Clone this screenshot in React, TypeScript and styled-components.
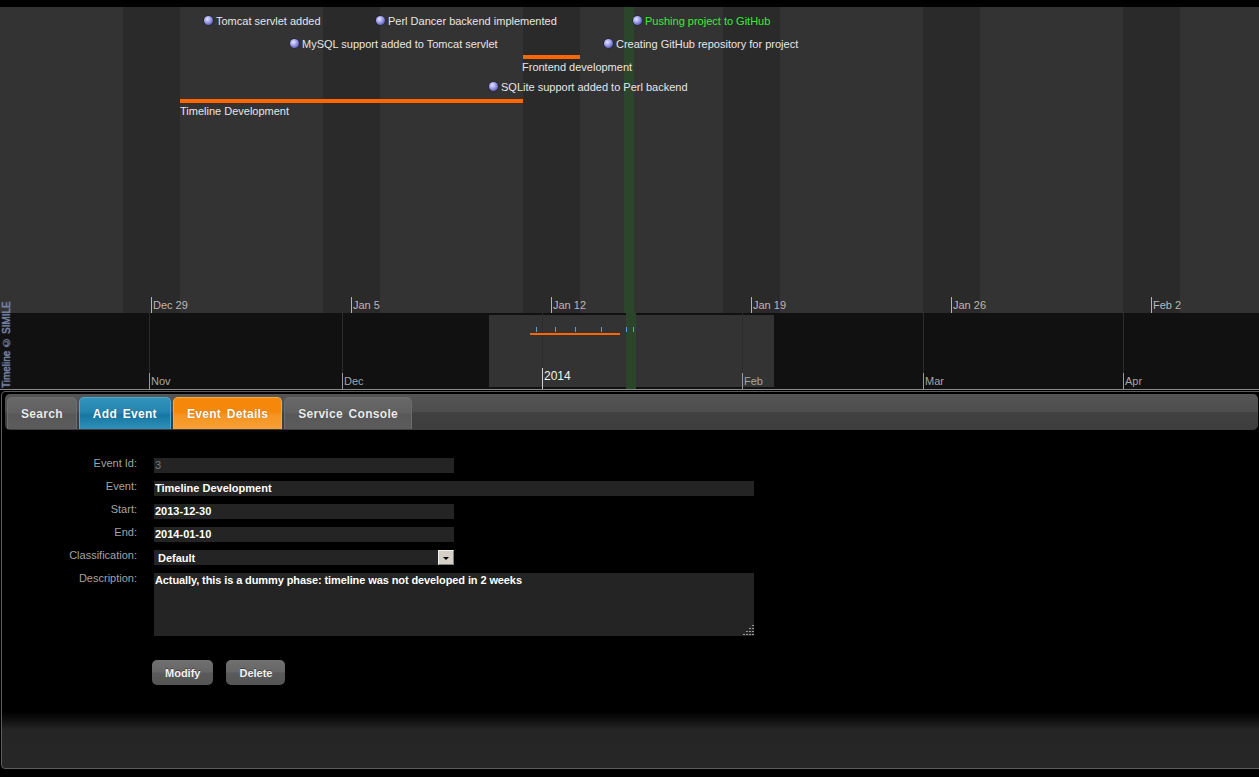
import React from "react";
import styled, { createGlobalStyle } from "styled-components";

const GlobalStyle = createGlobalStyle`
  html, body { margin: 0; padding: 0; background: #000; overflow: hidden; }
  body { font-family: "Liberation Sans", Arial, sans-serif; }
  * { box-sizing: border-box; }
`;

const Page = styled.div`
  width: 1259px;
  height: 777px;
  background: #000;
  display: flex;
  flex-direction: column;
  overflow: hidden;
`;

const TopGap = styled.div`
  height: 7px;
  flex: none;
`;

const Timeline = styled.div`
  position: relative;
  z-index: 1;
  flex: none;
  display: flex;
  flex-direction: column;
  border-bottom: 1px solid #8a8a8a;
`;

const UpperBand = styled.div`
  position: relative;
  height: 306px;
  background: #333333;
  overflow: hidden;
`;

const LowerBand = styled.div`
  position: relative;
  height: 76px;
  background: #111111;
  overflow: hidden;
`;

const Stripe = styled.div<{ $x: number; $w: number; $c: string }>`
  position: absolute;
  top: 0;
  bottom: 0;
  left: ${(p) => p.$x}px;
  width: ${(p) => p.$w}px;
  background: ${(p) => p.$c};
`;

const EventRow = styled.div<{ $x: number; $y: number; $green?: boolean }>`
  position: absolute;
  left: ${(p) => p.$x}px;
  top: ${(p) => p.$y}px;
  height: 13px;
  display: flex;
  align-items: center;
  gap: 3px;
  white-space: nowrap;
  font-size: 11px;
  line-height: 13px;
  color: ${(p) => (p.$green ? "#33f033" : "#e6e6e6")};
`;

const EventText = styled.span`
  position: relative;
  top: 1px;
`;

const Dot = styled.span`
  width: 9px;
  height: 9px;
  border-radius: 50%;
  flex: none;
  background: radial-gradient(circle at 38% 35%, #e4e4ff 0%, #a9a9ee 35%, #5656b8 80%, #2e2e70 100%);
  box-shadow: 0 0 0 0.5px #1c1c3a;
`;

const Bar = styled.div<{ $x: number; $y: number; $w: number }>`
  position: absolute;
  left: ${(p) => p.$x}px;
  top: ${(p) => p.$y}px;
  width: ${(p) => p.$w}px;
  height: 4px;
  background: #ff6600;
`;

const BarLabel = styled.div<{ $x: number; $y: number }>`
  position: absolute;
  left: ${(p) => p.$x}px;
  top: ${(p) => p.$y}px;
  font-size: 11px;
  line-height: 13px;
  color: #e6e6e6;
  white-space: nowrap;
`;

const Tick = styled.div<{ $x: number; $top: number; $h: number; $c: string }>`
  position: absolute;
  left: ${(p) => p.$x}px;
  top: ${(p) => p.$top}px;
  width: 1px;
  height: ${(p) => p.$h}px;
  background: ${(p) => p.$c};
`;

const DateLabel = styled.div<{ $x: number; $top: number; $c: string; $size?: number }>`
  position: absolute;
  left: ${(p) => p.$x}px;
  top: ${(p) => p.$top}px;
  font-size: ${(p) => p.$size ?? 11}px;
  line-height: 13px;
  color: ${(p) => p.$c};
  white-space: nowrap;
`;

const Highlight = styled.div`
  position: absolute;
  left: 489px;
  top: 2px;
  width: 285px;
  height: 72px;
  background: #333333;
`;

const MiniBar = styled.div`
  position: absolute;
  left: 530px;
  top: 20px;
  width: 90px;
  height: 2px;
  background: #ff6600;
`;

const Credit = styled.div`
  position: absolute;
  left: 1px;
  top: 302px;
  height: 79px;
  width: 12px;
  writing-mode: vertical-rl;
  transform: rotate(180deg);
  font-size: 10px;
  line-height: 12px;
  color: #6d7ca3;
  text-shadow: 0 0 1px #a9b5d6;
  white-space: nowrap;
  text-align: left;
`;

const Panel = styled.div`
  flex: none;
  margin: 1px -4px 0 1px;
  height: 378px;
  border: 1px solid #5c5c5c;
  border-radius: 4px;
  background: linear-gradient(
    to bottom,
    #000 0,
    #000 calc(100% - 56px),
    #141414 calc(100% - 46px),
    #252525 calc(100% - 38px),
    #272727 100%
  );
  display: flex;
  flex-direction: column;
`;

const TabBar = styled.div`
  margin: 2px 4px 0 3px;
  height: 36px;
  padding: 0 0 1px 2px;
  border-radius: 5px;
  background: linear-gradient(
    to bottom,
    #555 0%,
    #4e4e4e 48%,
    #414141 52%,
    #3d3d3d 100%
  );
  display: flex;
  align-items: flex-end;
  gap: 2px;
`;

const tabStyles = {
  gray: {
    bg: "linear-gradient(to bottom, #686868 0%, #606060 48%, #585858 52%, #5c5c5c 100%)",
    border: "#6c6c6c",
    color: "#ebebeb",
  },
  blue: {
    bg: "linear-gradient(to bottom, #2f93bb 0%, #2486b0 45%, #1676a2 55%, #2f90b9 100%)",
    border: "#4aa8cf",
    color: "#ffffff",
  },
  orange: {
    bg: "linear-gradient(to bottom, #f5890b 0%, #f5880a 45%, #f69421 55%, #f7a035 100%)",
    border: "#ffab3a",
    color: "#ffffff",
  },
};

type TabKind = keyof typeof tabStyles;

const Tab = styled.div<{ $kind: TabKind }>`
  height: 32px;
  padding: 0 13px;
  display: flex;
  align-items: center;
  border: 1px solid ${(p) => tabStyles[p.$kind].border};
  border-bottom: none;
  border-radius: 5px 5px 0 0;
  background: ${(p) => tabStyles[p.$kind].bg};
  color: ${(p) => tabStyles[p.$kind].color};
  font-size: 12px;
  font-weight: bold;
  letter-spacing: 0.3px;
  word-spacing: 2px;
  text-shadow: 0 0 1px rgba(0, 0, 0, 0.35);
  white-space: nowrap;
`;

const Form = styled.div`
  padding-top: 28px;
  display: grid;
  grid-template-columns: 135px auto;
  column-gap: 17px;
  row-gap: 8px;
  align-items: start;
`;

const Label = styled.div`
  text-align: right;
  font-size: 11px;
  line-height: 13px;
  margin-top: -1px;
  color: #a3a3a3;
`;

const Field = styled.input<{ $w: number; $muted?: boolean }>`
  display: block;
  width: ${(p) => p.$w}px;
  height: 15px;
  margin: 0;
  padding: 0 1px;
  border: none;
  outline: none;
  background: #242424;
  color: ${(p) => (p.$muted ? "#7a7a7a" : "#ffffff")};
  font-family: "Liberation Sans", Arial, sans-serif;
  font-size: 11px;
  font-weight: ${(p) => (p.$muted ? "normal" : "bold")};
  line-height: 15px;
`;

const SelectBox = styled.div`
  width: 300px;
  height: 15px;
  background: #242424;
  display: flex;
  align-items: center;
  justify-content: space-between;
  padding-left: 4px;
  color: #fff;
  font-size: 11px;
  font-weight: bold;
`;

const SelectArrow = styled.div`
  width: 16px;
  height: 15px;
  background: #d4d0c8;
  border: 1px solid;
  border-color: #f4f2ee #808080 #808080 #f4f2ee;
  display: flex;
  align-items: center;
  justify-content: center;
  &::after {
    content: "";
    border-left: 3px solid transparent;
    border-right: 3px solid transparent;
    border-top: 3px solid #000;
    margin-top: 1px;
  }
`;

const AreaWrap = styled.div`
  position: relative;
  width: 600px;
  height: 63px;
`;

const Area = styled.textarea`
  display: block;
  width: 600px;
  height: 63px;
  margin: 0;
  padding: 1px 1px;
  border: none;
  outline: none;
  resize: none;
  background: #242424;
  color: #fff;
  font-family: "Liberation Sans", Arial, sans-serif;
  font-size: 11px;
  font-weight: bold;
  line-height: 13px;
  letter-spacing: -0.1px;
`;

const Grip = styled.svg`
  position: absolute;
  right: 0;
  bottom: 0;
`;

const Actions = styled.div`
  grid-column: 2;
  margin: 16px 0 0 -2px;
  display: flex;
  gap: 13px;
`;

const Button = styled.div`
  height: 25px;
  padding: 0 13px;
  display: flex;
  align-items: center;
  border-radius: 5px;
  background: linear-gradient(to bottom, #707070 0%, #666 48%, #5a5a5a 52%, #555 100%);
  color: #f2f2f2;
  font-size: 11px;
  font-weight: bold;
  text-shadow: 0 -1px 0 rgba(0, 0, 0, 0.4);
`;

const weekStripes = [123, 323, 523, 723, 923, 1123];
const weekLabels = [
  { x: 151, t: "Dec 29" },
  { x: 351, t: "Jan 5" },
  { x: 551, t: "Jan 12" },
  { x: 751, t: "Jan 19" },
  { x: 951, t: "Jan 26" },
  { x: 1151, t: "Feb 2" },
];
const months = [
  { x: 149, t: "Nov" },
  { x: 342, t: "Dec" },
  { x: 742, t: "Feb" },
  { x: 923, t: "Mar" },
  { x: 1123, t: "Apr" },
];
const points = [
  { x: 204, y: 14, t: "Tomcat servlet added" },
  { x: 376, y: 14, t: "Perl Dancer backend implemented" },
  { x: 633, y: 14, t: "Pushing project to GitHub", green: true },
  { x: 290, y: 37, t: "MySQL support added to Tomcat servlet" },
  { x: 604, y: 37, t: "Creating GitHub repository for project" },
  { x: 489, y: 80, t: "SQLite support added to Perl backend" },
];
const miniTicks = [536, 555, 575, 601, 626, 633];

const OFF = 7;

export default function App() {
  return (
    <Page>
      <GlobalStyle />
      <TopGap />
      <Timeline>
        <UpperBand>
          {weekStripes.map((x) => (
            <Stripe key={x} $x={x} $w={57} $c="#2a2a2a" />
          ))}
          <Stripe $x={624} $w={10} $c="#2c462c" />
          {weekLabels.map((w) => (
            <React.Fragment key={w.t}>
              <Tick $x={w.x} $top={297 - OFF} $h={16} $c="#b5b5b5" />
              <DateLabel $x={w.x + 2} $top={299 - OFF} $c="#b8b8b8">
                {w.t}
              </DateLabel>
            </React.Fragment>
          ))}
          <Bar $x={523} $y={55 - OFF} $w={57} />
          <BarLabel $x={522} $y={61 - OFF}>Frontend development</BarLabel>
          <Bar $x={180} $y={99 - OFF} $w={343} />
          <BarLabel $x={180} $y={105 - OFF}>Timeline Development</BarLabel>
          {points.map((p) => (
            <EventRow key={p.t} $x={p.x} $y={p.y - OFF} $green={p.green}>
              <Dot />
              <EventText>{p.t}</EventText>
            </EventRow>
          ))}
        </UpperBand>
        <LowerBand>
          <Highlight />
          {[...months.map((m) => m.x), 542].map((x) => (
            <Tick key={x} $x={x} $top={0} $h={76} $c="#2c2c2c" />
          ))}
          <Stripe $x={626} $w={10} $c="#2a452a" />
          <MiniBar />
          {miniTicks.map((x) => (
            <Tick key={x} $x={x} $top={14} $h={5} $c="#5a9fd6" />
          ))}
          {months.map((m) => (
            <React.Fragment key={m.t}>
              <Tick $x={m.x} $top={60} $h={16} $c="#9a9a9a" />
              <DateLabel $x={m.x + 2} $top={62} $c="#a6a6a6">
                {m.t}
              </DateLabel>
            </React.Fragment>
          ))}
          <Tick $x={542} $top={55} $h={21} $c="#cfcfcf" />
          <DateLabel $x={544} $top={57} $c="#f2f2f2" $size={12}>
            2014
          </DateLabel>
        </LowerBand>
        <Credit>Timeline © SIMILE</Credit>
      </Timeline>
      <Panel>
        <TabBar>
          <Tab $kind="gray">Search</Tab>
          <Tab $kind="blue">Add Event</Tab>
          <Tab $kind="orange">Event Details</Tab>
          <Tab $kind="gray">Service Console</Tab>
        </TabBar>
        <Form>
          <Label>Event Id:</Label>
          <Field $w={300} $muted readOnly defaultValue="3" />
          <Label>Event:</Label>
          <Field $w={600} readOnly defaultValue="Timeline Development" />
          <Label>Start:</Label>
          <Field $w={300} readOnly defaultValue="2013-12-30" />
          <Label>End:</Label>
          <Field $w={300} readOnly defaultValue="2014-01-10" />
          <Label>Classification:</Label>
          <SelectBox>
            Default
            <SelectArrow />
          </SelectBox>
          <Label>Description:</Label>
          <AreaWrap>
            <Area
              readOnly
              defaultValue="Actually, this is a dummy phase: timeline was not developed in 2 weeks"
            />
            <Grip width="11" height="11" viewBox="0 0 11 11">
              {[
                [9, 1],
                [9, 4],
                [6, 4],
                [9, 7],
                [6, 7],
                [3, 7],
                [9, 10],
                [6, 10],
                [3, 10],
                [0, 10],
              ].map(([x, y]) => (
                <rect key={`${x}-${y}`} x={x} y={y - 1} width="2" height="1" fill="#9a9a9a" />
              ))}
            </Grip>
          </AreaWrap>
          <Actions>
            <Button>Modify</Button>
            <Button>Delete</Button>
          </Actions>
        </Form>
      </Panel>
    </Page>
  );
}
